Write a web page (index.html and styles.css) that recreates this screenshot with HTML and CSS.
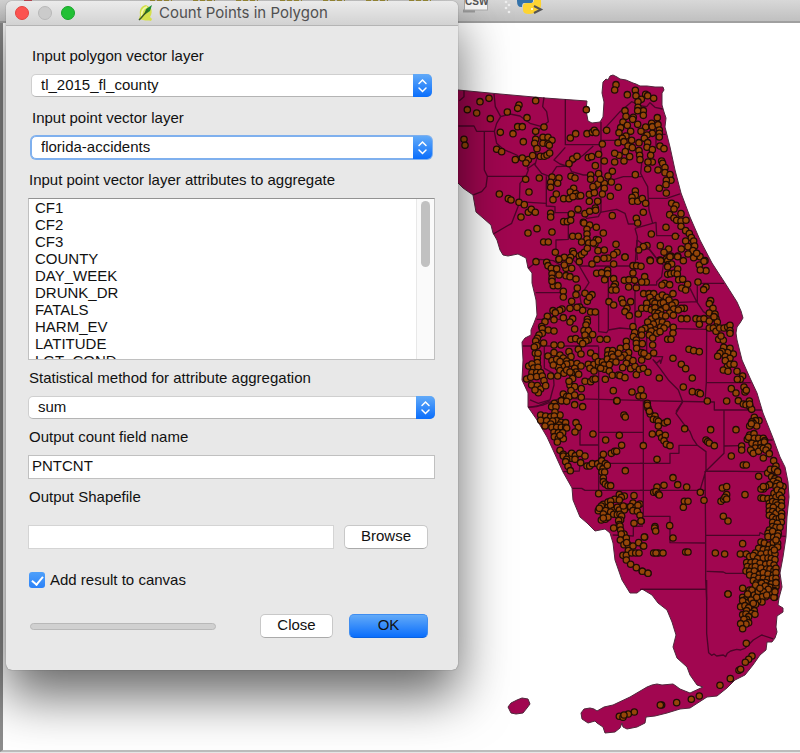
FILE: index.html
```html
<!DOCTYPE html>
<html lang="en">
<head>
<meta charset="utf-8">
<title>Count Points in Polygon</title>
<link rel="stylesheet" href="styles.css">
</head>
<body>
<header class="toolbar">
  <svg class="toolbar-icons" width="560" height="20" viewBox="0 0 560 20" aria-hidden="true">
    <path d="M24 0h8" stroke="#c8505a" stroke-width="2"/>
    <path d="M150 0h22M193 0h22M236 0h22M280 0h22M323 0h22M366 0h22M409 0h22" stroke="#a8983c" stroke-width="2" stroke-dasharray="5 2"/>
    <path d="M463 11h12" stroke="#9a9a9a" stroke-width="3"/>
    <rect x="464.500" y="-6" width="23" height="16" fill="#f8f8f8" stroke="#aaa"/>
    <text class="csw" x="465" y="5">CSW</text>
    <g fill="#eee"><circle cx="506" cy="2" r="1.300"/><circle cx="509" cy="5" r="1.300"/><circle cx="506" cy="8" r="1.300"/><circle cx="509" cy="12" r="1.300"/></g>
    <path d="M517-4h16v5q0 2-3 2h-6q-2 0-2 4h-1q-4 0-4-6z" fill="#3573aa"/>
    <path d="M541-4v6q1 8-5 9-2 3-7 3-6 0-6-4V6q0-3 4-3h5q2 0 2-3v-4z" fill="#fdd432"/>
    <circle cx="532" cy="9" r="1" fill="#fff"/>
    <path d="M534 6l7 3.500-7 3.500" fill="none" stroke="#555" stroke-width="2"/>
  </svg>
</header>
<main class="canvas">
  <svg class="map" width="360" height="727" viewBox="440 23 360 727" role="img" aria-label="Map of Florida counties and accident points">
    <defs>
      <marker id="dot" markerUnits="userSpaceOnUse" markerWidth="26" markerHeight="26" viewBox="-13 -13 26 26">
        <circle r="9.500" fill="#964609" stroke="#1f0d04" stroke-width="3.800"/>
      </marker>
    </defs>
    <g class="land">
      <path d="M440 89L458 90L500 94L545 98L587 101L586 110L588 121L592 123L600 122L603 117L604 102L602 93L603 82L606 79L608 80L610 76L613 75L617 77L620 79L626 80L633 83L636 84L640 86L647 86L655 87L663 87L664 90L662 93L662 105L664 112L666 118L665 127L670 147L675 170L681 193L690 217L700 240L712 263L725 283L737 302L741 311L743 318L740 323L737 327L736 333L737 340L742 360L750 378L757 393L763 413L773 438L780 457L785 467L788 482L789 497L787 517L786 537L783 557L780 573L782 587L779 598L778 605L783 608L783 612L777 616L776 627L777 632L775 638L772 642L767 642L766 650L760 655L753 665L745 675L735 680L727 688L717 696L707 697L690 708L680 709L667 713L655 716L646 717L645 723L637 727L627 729L623 727L622 723L620 728L615 732L605 733L603 727L597 723L595 721L588 723L582 719L581 713L584 709L590 708L594 709L597 711L604 707L613 705L630 697L647 687L652 685L657 684L662 685L673 684L676 686L680 689L690 693L703 687L697 685L690 675L687 667L677 658L673 647L676 635L672 622L667 610L658 603L652 595L642 589L637 593L630 593L622 580L615 560L613 543L610 533L605 529L595 531L587 523L580 517L573 500L572 488L563 472L553 450L547 437L537 420L528 407L528 393L522 380L523 360L522 342L525 338L531 335L531 330L534 323L537 315L536 300L532 283L532 273L528 268L526 258L522 256L518 254L508 256L503 255L500 250L497 240L493 233L491 225L483 218L476 212L473 195L463 188L458 183L440 180Z"/>
      <path d="M508 707L511 703L517 700L522 698L528 699L530 704L527 708L523 713L516 714L511 713Z"/>
    </g>
    <g class="tile" transform="translate(450 60) scale(.3333)">
      <path d="M42 92V110L28 122M25 198H72L80 214H135M103 214V330L112 349H228M112 349L108 380L95 395L70 405M132 102L136 140L152 170L140 190L133 214L140 250L160 268L200 285L230 310L235 330L228 349L210 370L208 430L185 490L130 522M152 170L180 162L210 168L240 190L275 200L295 185L290 155L278 140L282 112M275 200L255 225L250 260L262 290L255 315L275 340L300 350L320 320L357 318L400 285L430 258M230 328L258 308M346 118V254H453M346 262L312 300L330 312L350 318M357 318L365 335L400 345H450M453 186V455M289 349V438L315 440V458H355V538L318 540V580M208 425L250 428L289 430M355 458L400 460L410 475L445 470L453 455"/>
      <polyline points="117,115 90,125 52,149 80,159 121,176 151,217 42,238 45,256 207,135 203,145 172,156 231,173 257,122 203,200 217,200 189,221 220,245 257,214 282,201 140,268 155,275 196,299 217,294 235,299 228,309 248,287 257,238 254,250 261,266 279,232 294,232 306,241 279,250 294,252 298,256 271,289 283,289 291,285 299,279 361,234 377,221 411,221 427,217 433,211 438,218 409,149 368,297 381,289 357,311 415,293 425,290 446,283 436,317 227,358 268,354 237,396 148,402 175,416 183,420 207,427 223,434 306,351 327,354 302,367 323,370 302,382 319,402 309,419 363,349 375,354 371,385 361,396 341,416 357,416 377,401 384,408 392,407 369,410 422,345 446,341 422,358 436,379 418,403 433,398 418,424 443,424 443,372 429,380 213,471 235,457 244,448 256,457 302,460 302,471 364,462 341,485 352,485 362,481 384,448 405,461 419,454 436,444 437,451 400,487 402,489 419,495 439,502 411,508 411,522 411,537 416,549 439,539 435,551 368,529 385,529 395,546 306,516 261,506 234,519 281,546 295,546 316,577 368,574 371,581 388,588 395,584 403,577 412,565 444,572 327,597 343,592 362,592 445,540 430,549"/>
    </g>
    <g class="tile" transform="translate(600 60) scale(.3333)">
      <path d="M8 212L60 155L95 125L125 138L140 140L150 128L165 142L188 147M0 241H55M197 223H168V265M120 290L125 310L122 340L132 360L143 380L145 420L147 450L158 490M0 372L70 350H125M145 415H200L240 402M0 457L50 448L75 460L85 492H105M105 505L168 487L170 527H240M105 505L112 530L110 570L112 600M112 540L150 570L170 595"/>
      <polyline points="48,74 44,90 82,104 106,91 108,107 137,103 143,107 161,115 124,118 114,125 75,152 78,169 114,142 130,152 113,152 130,166 172,173 100,172 98,178 69,186 82,196 62,203 113,193 92,214 57,218 78,228 67,235 54,248 95,241 72,245 137,201 155,190 157,200 174,194 178,210 178,220 178,231 157,220 123,214 141,225 133,235 117,248 143,248 141,262 157,269 84,258 97,263 76,275 117,272 119,286 120,299 89,290 57,286 44,280 44,306 72,303 152,286 157,306 144,306 143,327 174,330 180,258 192,266 185,303 188,310 195,323 195,338 210,344 213,361 199,361 198,374 178,385 199,399 7,252 20,211 13,303 106,344 37,334 24,348 34,366 13,370 13,385 1,358 7,402 31,409 55,382 106,393 106,406 96,412 97,424 113,424 127,416 137,430 130,457 109,475 113,489 37,467 10,519 48,553 154,522 198,502 215,430 228,436 222,447 209,464 243,461 222,474 230,481 243,483 258,481 243,499 257,512 226,529 268,521 274,533 257,543 281,543 264,560 284,558 244,567 279,572 264,582 290,581 181,557 206,567 192,577 141,557 130,560 116,570 75,591 51,577 41,584 13,570 24,594 213,588 233,588 199,597 150,600 180,600 300,590 315,602"/>
    </g>
    <g class="tile" transform="translate(510 240) scale(.3333)">
      <path d="M55 85L90 58L130 62L150 75L190 60L208 78H390M208 78L237 128L210 170L215 200L266 212V275L290 278L295 270V90M77 158H170M80 238H160M295 270L330 264L375 268V80L381 0M38 318H266M103 320V385L130 400L132 435L120 480L85 490L60 480M266 320V480M55 502L100 495L150 475L390 481"/>
      <polyline points="78,65 110,67 147,58 178,62 114,77 208,65 261,58 282,55 311,72 246,72 345,51 124,85 140,86 168,85 163,75 185,85 126,101 147,105 126,115 168,107 180,110 198,117 130,137 144,137 126,124 202,144 160,154 160,171 198,164 225,160 246,164 185,184 232,184 238,172 260,100 275,98 293,90 293,101 284,119 311,116 316,132 312,140 305,150 318,150 369,77 380,77 369,99 343,121 357,119 374,121 356,141 379,143 335,178 297,185 311,195 339,189 362,185 351,205 345,215 358,227 385,222 209,201 218,211 201,202 180,205 156,207 149,211 129,212 136,218 112,229 132,239 160,233 188,236 180,246 242,216 256,216 232,238 232,246 228,255 105,245 95,260 97,266 115,270 132,273 97,280 87,285 82,295 194,267 222,272 235,272 183,298 197,296 225,285 248,284 235,300 211,303 228,303 218,311 101,309 77,303 81,317 73,321 76,340 82,355 84,340 82,368 270,298 291,298 132,315 153,315 205,328 213,342 242,339 177,335 132,338 150,345 114,348 126,362 140,358 160,354 183,350 170,363 183,370 170,372 157,378 145,382 130,375 150,365 150,392 162,400 170,390 201,371 213,378 194,385 198,396 185,400 56,378 66,372 71,384 84,382 66,398 80,398 92,398 50,417 62,412 80,410 97,408 102,422 65,435 82,437 92,447 85,458 107,437 75,450 122,408 143,408 180,396 206,403 188,416 180,436 177,424 194,440 183,452 160,462 170,470 177,470 157,482 194,465 214,472 214,446 225,424 242,425 249,418 256,417 256,350 235,373 252,373 266,378 265,365 277,366 282,375 294,332 308,332 293,345 305,343 292,357 309,351 305,366 318,366 298,374 284,388 298,393 307,406 286,418 325,405 330,407 345,413 331,325 349,304 349,320 356,338 343,345 333,352 356,355 349,370 338,383 362,386 375,379 369,362 379,404 388,388 369,260 374,278 370,290 379,300 379,310 380,325 325,340 240,385 252,393 272,385 310,452 366,456 387,468 320,483"/>
    </g>
    <g class="tile" transform="translate(640 240) scale(.3333)">
      <path d="M20 18L45 50L70 75L65 110L50 125V135H-15M252 130H172V185L100 188M125 118L150 145L170 185L190 215L220 235L240 250M110 266L200 268L199 428H332M199 428L196 470L202 485M0 482L223 486V510H365M40 360L60 385L85 420L115 450L128 485L108 515M38 358L50 370L60 360L62 370L68 350H40M20 270V345L0 350"/>
      <polyline points="31,62 62,62 3,79 83,62 90,50 113,50 130,62 161,53 170,40 85,74 95,72 83,80 178,75 192,64 198,92 181,90 83,103 92,101 103,99 113,87 112,102 116,119 128,118 14,110 19,126 5,126 74,130 66,135 89,134 125,144 143,133 137,150 174,126 198,141 191,149 99,161 11,161 27,161 41,161 30,172 56,172 67,165 79,172 38,185 87,180 20,190 45,190 62,190 70,188 106,188 96,195 5,205 20,205 34,209 45,203 62,212 78,202 101,207 89,219 133,205 124,205 115,210 100,226 45,218 54,220 65,225 34,237 47,229 77,228 55,246 67,246 40,252 81,253 23,246 30,262 62,261 72,264 100,262 99,279 45,270 34,273 50,280 28,285 38,294 60,275 15,265 5,270 5,285 7,311 38,315 83,298 93,298 124,236 141,236 168,236 180,238 192,236 178,253 208,243 228,236 232,246 212,182 208,191 219,205 208,219 225,222 222,230 208,264 228,261 220,264 228,274 239,264 252,264 263,261 270,256 270,272 270,280 236,298 250,301 243,288 147,328 161,332 178,335 99,355 5,338 5,360 24,349 41,339 12,340 124,373 137,386 157,414 58,414 10,385 24,397 130,441 157,455 175,458 181,461 251,322 270,325 280,342 263,338 246,335 240,340 233,349 256,350 270,355 256,362 262,380 270,373 282,373 250,390 264,394 291,394 308,408 301,418 292,418 274,446 288,459 312,441 315,456 319,451 3,449 10,468"/>
    </g>
    <g class="tile" transform="translate(520 400) scale(.3333)">
      <path d="M25 22L50 20L90 2M236 0V270M236 97H369M180 85V135H236M130 215L178 213L180 190H369M157 265H185L195 271H369M278 405L340 408V380L369 378"/>
      <polyline points="103,10 124,2 140,4 164,14 188,20 291,2 95,20 108,20 62,45 77,48 92,50 120,45 105,36 62,61 80,62 103,48 110,62 98,63 92,72 75,78 124,67 137,68 118,75 96,82 110,82 124,82 137,82 140,84 168,68 175,82 165,96 102,97 115,98 128,98 103,110 115,115 130,116 120,106 112,126 312,45 316,51 219,102 257,120 298,106 305,136 274,160 284,154 290,154 250,163 120,151 130,163 130,168 147,168 153,175 155,160 166,167 179,160 195,168 165,178 140,178 182,188 137,185 144,199 151,212 201,198 209,198 217,191 233,191 245,182 256,191 240,200 249,206 262,196 246,216 254,216 250,234 250,245 256,252 264,257 272,257 316,212 236,281 298,284 313,288 304,292 342,287 284,298 298,300 250,313 264,306 272,303 244,318 264,322 272,316 235,332 257,332 238,325 250,342 281,332 272,336 292,322 298,330 319,322 313,330 310,318 339,309 332,320 348,322 360,312 354,316 339,332 352,334 360,346 364,363 342,370 244,360 256,358 264,352 250,354 281,343 292,344 300,343 305,348 302,360 296,362 298,374 300,378 281,384 302,390 312,402 304,402 319,414 301,420 312,434 325,435 320,428 339,438 325,452 309,466 319,466 335,459 347,459 357,459 319,480 332,493 349,503 367,514 384,520 356,428 370,438 374,411"/>
    </g>
    <g class="tile" transform="translate(640 400) scale(.3333)">
      <path d="M10 0V349H90V428L197 429M0 190H90V160H117V136H172L198 155V210L180 271M252 30V160L198 213L385 215M252 138L300 137M372 120H398M128 5L108 40L130 70L150 95L158 115L172 136M0 271H195M195 213L197 406L197 540L200 600M197 406H358L360 398L375 405L437 409M200 514L250 516L258 520H318M0 568H197"/>
      <polyline points="202,3 260,3 295,2 310,12 22,10 24,24 22,16 31,42 28,34 45,48 40,58 50,60 55,64 55,78 74,69 82,65 37,102 58,100 65,113 76,106 72,122 79,133 90,137 10,137 134,86 212,89 288,89 198,120 203,125 208,129 223,137 51,178 274,168 305,138 305,150 310,195 319,195 99,233 113,254 72,256 51,261 41,277 48,275 55,282 58,285 140,261 181,277 133,304 144,304 130,322 192,301 247,264 260,260 260,284 243,304 251,298 255,292 260,297 315,284 356,229 383,219 250,349 264,363 45,380 44,384 47,393 89,377 99,414 13,411 11,438 41,459 55,459 48,459 69,459 137,456 144,456 226,459 254,462 308,431 301,462 3,363 7,514 24,520 264,582"/>
      <polyline points="328,3 318,14 330,20 335,28 329,12 343,52 357,62 347,62 336,65 340,70 350,78 329,78 334,71 329,105 322,118 326,112 342,101 343,115 356,115 370,115 374,122 336,130 349,133 363,130 373,126 346,144 363,143 336,155 332,150 340,160 356,154 370,145 384,140 378,150 388,161 370,174 401,182 408,198 391,208 404,208 413,215 395,230 405,236 415,240 400,244 411,250 408,260 429,260 420,255 389,254 377,260 370,267 363,267 370,260 363,294 370,295 384,296 397,294 402,280 412,270 425,275 408,291 418,285 425,295 388,310 398,305 408,308 424,308 388,320 412,315 400,322 388,333 398,335 408,340 388,346 418,328 425,318 425,340 398,352 408,357 418,355 425,350 398,367 424,367 412,370 398,380 388,390 408,382 420,382 384,400 398,394 415,400 384,410 401,412 413,408 363,426 373,429 388,435 400,428 413,430 408,420 356,445 370,449 384,449 397,445 413,441 346,459 363,462 380,459 394,458 405,462 403,450 319,462 329,470 340,467 353,476 370,474 384,474 394,476 405,479 320,488 333,488 346,486 360,490 377,493 390,490 402,495 322,500 318,513 336,501 346,500 363,504 380,507 390,507 402,512 408,505 329,514 343,513 357,524 370,518 384,522 400,525 408,518 329,525 343,530 356,535 370,535 384,538 397,535 408,535 340,542 350,549 363,548 377,548 408,548 394,552 346,560 360,563 380,558 390,562 408,560 308,565 329,570 353,577 369,576 388,576 403,572 336,584 308,592 322,592 343,586 360,592 377,590 391,585 404,592 350,598"/>
    </g>
    <g class="tile" transform="translate(490 580) scale(.3333)">
      <path d="M650 0V160L656 218L665 226L672 222L680 228L700 225L707 230L712 220L722 213L740 208L752 210L765 205L790 180L815 165L850 177M455 28H648"/>
      <polyline points="714,42 786,30 773,42 793,45 805,35 797,15 815,10 826,18 840,36 852,52 855,35 858,8 835,28 820,35 810,25 817,50 830,45 816,66 803,62 800,52 783,60 765,60 768,68 758,62 752,80 765,77 776,83 770,92 797,73 790,70 793,92 785,100 795,103 758,104 768,102 776,110 770,118 762,118 776,128 768,132 752,131 758,146 769,190 786,228 776,238 766,247 747,271 752,268 721,296 690,316 628,348 604,358 560,368 515,375 511,375 433,396 415,402 388,409 399,412 402,405"/>
    </g>
  </svg>
</main>

<section class="dialog" role="dialog" aria-labelledby="dialog-title">
  <div class="titlebar">
    <div class="lights">
      <button class="light red" type="button" aria-label="Close window"></button>
      <button class="light grey" type="button" aria-label="Minimize" disabled></button>
      <button class="light green" type="button" aria-label="Zoom"></button>
    </div>
    <h1 class="title" id="dialog-title">
      <svg width="16" height="18" viewBox="0 0 16 18" aria-hidden="true">
        <path d="M8 1C3 2 1 6 2 11L1 15l4 1c3 1 6 0 8 1l1-2-2-2c2-3 2-6 1-9z" fill="#d5e04a"/>
        <path d="M4 13C3 8 5 4 9 3" fill="none" stroke="#f2f6a8" stroke-width="2"/>
        <path d="M14 1L12 7 6 11 8 5z" fill="#1c8a2e"/>
        <path d="M10 6L3 14l-2 2" fill="none" stroke="#3c5c22" stroke-width="1.500"/>
      </svg>
      Count Points in Polygon
    </h1>
  </div>
  <form class="form">
    <div class="layers">
      <div class="field">
        <label for="polygon">Input polygon vector layer</label>
        <div class="combo">
          <select id="polygon"><option>tl_2015_fl_county</option></select>
          <svg class="arrows" viewBox="0 0 19 23" aria-hidden="true"><path d="M6 9.500L9.500 6 13 9.500M6 14L9.500 17.500 13 14"/></svg>
        </div>
      </div>
      <div class="field">
        <label for="points">Input point vector layer</label>
        <div class="combo focused">
          <select id="points"><option>florida-accidents</option></select>
          <svg class="arrows" viewBox="0 0 19 23" aria-hidden="true"><path d="M6 9.500L9.500 6 13 9.500M6 14L9.500 17.500 13 14"/></svg>
        </div>
      </div>
    </div>
    <div class="field">
      <label for="attributes">Input point vector layer attributes to aggregate</label>
      <div class="listbox">
        <select id="attributes" multiple size="9">
          <option>CF1</option>
          <option>CF2</option>
          <option>CF3</option>
          <option>COUNTY</option>
          <option>DAY_WEEK</option>
          <option>DRUNK_DR</option>
          <option>FATALS</option>
          <option>HARM_EV</option>
          <option>LATITUDE</option>
          <option>LGT_COND</option>
        </select>
        <div class="track"><div class="thumb"></div></div>
      </div>
    </div>
    <div class="field">
      <label for="method">Statistical method for attribute aggregation</label>
      <div class="combo">
        <select id="method"><option>sum</option></select>
        <svg class="arrows" viewBox="0 0 19 23" aria-hidden="true"><path d="M6 9.500L9.500 6 13 9.500M6 14L9.500 17.500 13 14"/></svg>
      </div>
    </div>
    <div class="field">
      <label for="count">Output count field name</label>
      <input class="textbox" id="count" type="text" value="PNTCNT">
    </div>
    <div class="field output">
      <label for="shapefile">Output Shapefile</label>
      <div class="file-row">
        <input class="textbox" id="shapefile" type="text">
        <button class="button browse" type="button">Browse</button>
      </div>
    </div>
    <label class="check">
      <input type="checkbox" checked>
      <span>Add result to canvas</span>
    </label>
    <div class="footer">
      <div class="progress" role="progressbar" aria-label="Progress" aria-valuenow="0"></div>
      <button class="button close" type="button">Close</button>
      <button class="button ok" type="submit">OK</button>
    </div>
  </form>
</section>
</body>
</html>
```
FILE: styles.css
```css
* {
  box-sizing: border-box;
}

body {
  margin: 0;
  min-height: 100vh;
  display: flex;
  flex-direction: column;
  position: relative;
  overflow: hidden;
  background: #e6e6e6;
  color: #111;
  font: 15px/20px "Liberation Sans", Arial, sans-serif;
}

.toolbar {
  height: 23px;
  background: linear-gradient(#d8d8d8, #c0c0c0);
  border-bottom: 2px solid #a0a0a0;
}

.toolbar-icons {
  display: block;
}

.csw {
  font: bold 10px "Liberation Sans", sans-serif;
  fill: #555;
}

.canvas {
  flex: 1;
  margin-bottom: 1px;
  padding-left: 437px;
  background: #fff;
  border-left: 3px solid #8c8c8c;
  border-bottom: 2px solid #bcbcbc;
}

.map {
  display: block;
}

.land {
  fill: #a10650;
  stroke: #50273c;
  stroke-width: 1;
  stroke-linejoin: round;
}

.tile path {
  fill: none;
  stroke: #4b0528;
  stroke-width: 4;
  stroke-linejoin: round;
}

.tile polyline {
  fill: none;
  stroke: none;
  marker: url(#dot);
}

.dialog {
  position: absolute;
  top: 1px;
  left: 6px;
  width: 452px;
  background: #e8e8e8;
  border-radius: 6px;
  box-shadow: 0 0 1px rgba(0, 0, 0, .6), 0 26px 52px rgba(0, 0, 0, .6);
}

.titlebar {
  display: flex;
  align-items: center;
  height: 25px;
  padding: 0 9px;
  background: linear-gradient(#ebebeb, #d2d2d2);
  border-bottom: 1px solid #b4b4b4;
  border-radius: 6px 6px 0 0;
}

.lights {
  display: flex;
  gap: 9px;
}

.light {
  width: 14px;
  height: 14px;
  padding: 0;
  border: 1px solid;
  border-radius: 50%;
}

.red {
  background: #fc5350;
  border-color: #e2443f;
}

.grey {
  background: #cbcbcb;
  border-color: #b8b8b8;
}

.green {
  background: #22c035;
  border-color: #17a62a;
}

.title {
  display: flex;
  align-items: center;
  gap: 5px;
  margin: 0 0 0 63px;
  color: #505050;
  font: 15px/20px Inter, "Liberation Sans", sans-serif;
}

.form {
  display: flex;
  flex-direction: column;
  gap: 8px;
  padding: 20px 23px 32px 22px;
}

.layers {
  display: flex;
  flex-direction: column;
  gap: 11px;
  padding: 0 3px 3px;
}

.field {
  display: flex;
  flex-direction: column;
  gap: 8px;
}

.field label {
  padding-left: 1px;
}

.combo {
  position: relative;
  display: flex;
  height: 23px;
}

.combo select {
  flex: 1;
  appearance: none;
  padding: 0 24px 2px 9px;
  background: #fff;
  border: 1px solid #cfcfcf;
  border-bottom-color: #b4b4b4;
  border-radius: 5px;
  color: inherit;
  font: 15px/18px "Liberation Sans", Arial, sans-serif;
}

.focused select {
  border-color: #7fb0ee;
  box-shadow: 0 0 0 1px #7fb0ee;
}

.arrows {
  position: absolute;
  top: 0;
  right: 0;
  width: 19px;
  height: 23px;
  background: linear-gradient(#62aaf8, #0a6efc);
  border-radius: 0 5px 5px 0;
  pointer-events: none;
  fill: none;
  stroke: #fff;
  stroke-width: 1.5;
  stroke-linecap: round;
}

.listbox {
  display: flex;
  height: 162px;
  background: #fff;
  border: 1px solid #c0c0c0;
  border-top-color: #929292;
}

.listbox select {
  flex: 1;
  padding: 0 0 0 6px;
  overflow: hidden;
  background: #fff;
  border: 0;
  color: inherit;
  font: 15px/17px "Liberation Sans", Arial, sans-serif;
}

.listbox option {
  height: 17px;
  min-height: 17px;
  padding: 0;
}

.track {
  width: 18px;
  padding: 2px 4px;
  background: #fafafa;
  border-left: 1px solid #e8e8e8;
}

.thumb {
  width: 9px;
  height: 66px;
  background: #c1c1c1;
  border-radius: 5px;
}

.textbox {
  height: 24px;
  padding: 0 3px 3px;
  background: #fff;
  border: 1px solid #c0c0c0;
  border-radius: 0;
  color: inherit;
  font: inherit;
}

.file-row {
  display: flex;
  gap: 10px;
  padding: 10px 7px 0 0;
}

.file-row .textbox {
  flex: 1;
  min-width: 0;
  border-color: #d4d4d4;
}

.button {
  height: 24px;
  padding: 0 0 3px;
  background: #fff;
  border: 1px solid #c8c8c8;
  border-bottom-color: #aaa;
  border-radius: 5px;
  color: inherit;
  font: inherit;
}

.browse {
  width: 84px;
}

.check {
  display: flex;
  align-items: center;
  gap: 5px;
  margin-top: 13px;
  padding-left: 1px;
}

.check input {
  appearance: none;
  width: 16px;
  height: 16px;
  margin: 0;
  border-radius: 3px;
  background: linear-gradient(#4fa0fa, #2b82f8);
}

.check input:checked::before {
  content: "";
  display: block;
  width: 5px;
  height: 9px;
  margin: 2px 0 0 5px;
  border: solid #fff;
  border-width: 0 2px 2px 0;
  transform: rotate(40deg);
}

.footer {
  display: flex;
  align-items: center;
  gap: 16px;
  margin-top: 16px;
  padding: 0 7px 0 2px;
}

.progress {
  flex: 1;
  height: 7px;
  margin-right: 28px;
  background: #d0d0d0;
  border: 1px solid #b8b8b8;
  border-radius: 4px;
}

.close {
  width: 73px;
}

.ok {
  width: 79px;
  background: linear-gradient(#62aaf8, #0a6efc);
  border-color: #3f8df0;
  border-bottom-color: #0a62e0;
}
```
